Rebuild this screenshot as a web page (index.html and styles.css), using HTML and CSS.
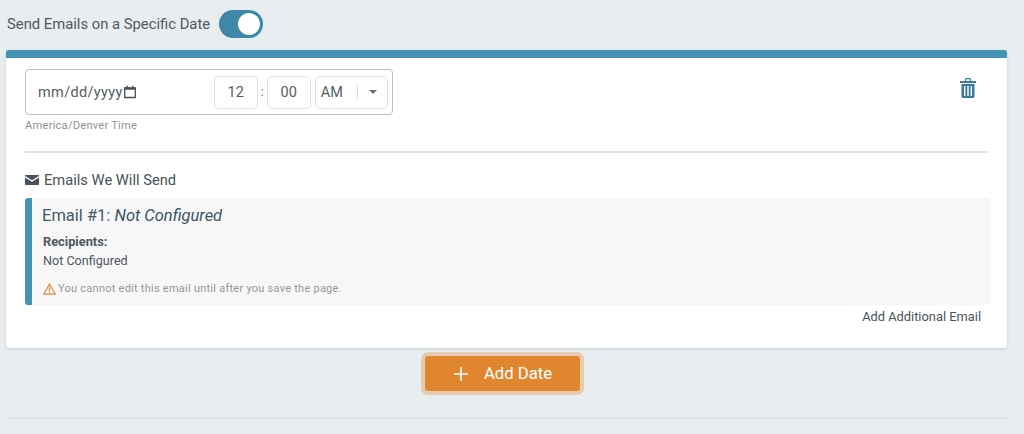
FILE: index.html
```html
<!DOCTYPE html>
<html lang="en">
<head>
<meta charset="utf-8">
<title>Send Emails on a Specific Date</title>
<link rel="stylesheet" href="styles.css">
</head>
<body>
<div class="page">
  <div class="head">
    <span class="head-label">Send Emails on a Specific Date</span>
    <span class="toggle"><span class="knob"></span></span>
  </div>
  <section class="card">
    <div class="card-top">
      <div class="date-col">
        <div class="date-box">
          <span class="date-text">mm/dd/yyyy</span>
          <svg class="cal" viewBox="0 0 14 14" width="14" height="14"><path fill="none" stroke="#4a5157" stroke-width="1.3" d="M1.700 2.800h10.600v9.700H1.700z"/><path fill="#4a5157" d="M1 2.500h12v2.300H1zM3.500.8h1.400v2H3.500zM9.100.8h1.400v2H9.100z"/></svg>
          <span class="time-cell">12</span>
          <span class="colon">:</span>
          <span class="time-cell">00</span>
          <span class="ampm"><span class="ampm-text">AM</span><span class="ampm-sep"></span><span class="caret"></span></span>
        </div>
        <div class="tz">America/Denver Time</div>
      </div>
      <svg class="trash" viewBox="0 0 16 20" width="16" height="20"><path fill="#3a7a96" d="M0 3h16v2H0zM5 3V1.300C5 .6 5.600 0 6.300 0h3.400C10.400 0 11 .6 11 1.300V3H9.800V1.200H6.200V3z"/><path fill="#3a7a96" fill-rule="evenodd" d="M1.500 6h13v12.200c0 1-.8 1.800-1.800 1.800H3.300c-1 0-1.800-.8-1.800-1.800zM4 8v10h1.400V8zM7.300 8v10h1.400V8zM10.600 8v10H12V8z"/></svg>
    </div>
    <hr class="rule">
    <div class="emails-head">
      <svg class="env" viewBox="0 0 14 10" width="14" height="10"><path fill="#4a5157" d="M0 1C0 .4.400 0 1 0h12c.6 0 1 .4 1 1L7 5.200zM0 2.600l7 4.200 7-4.200V9c0 .6-.4 1-1 1H1c-.6 0-1-.4-1-1z"/></svg>
      <span>Emails We Will Send</span>
    </div>
    <div class="email">
      <div class="email-title">Email #1: <em>Not Configured</em></div>
      <div class="rec-label">Recipients:</div>
      <div class="rec-value">Not Configured</div>
      <div class="warn">
        <svg viewBox="0 0 13 12" width="13" height="12"><path fill="none" stroke="#e08a3c" stroke-width="1.200" stroke-linejoin="round" d="M6.500 1 12.300 11.200H.7z"/><path fill="#e08a3c" d="M5.900 4.300h1.200v3.900H5.900zM5.900 8.900h1.200v1.200H5.900z"/></svg>
        <span>You cannot edit this email until after you save the page.</span>
      </div>
    </div>
    <div class="add-email">Add Additional Email</div>
  </section>
  <div class="add-row">
    <button class="add-date" type="button">
      <svg viewBox="0 0 14 14" width="14" height="14"><path fill="#fff" d="M6.200 0h1.600v6.200H14v1.600H7.800V14H6.200V7.800H0V6.200h6.200z"/></svg>
      <span>Add Date</span>
    </button>
  </div>
  <hr class="bottom-rule">
</div>
</body>
</html>
```
FILE: styles.css
```css
* { box-sizing: border-box; }
html, body { margin: 0; padding: 0; }
body {
  width: 1024px;
  height: 434px;
  overflow: hidden;
  background: #e8edf0;
  font-family: Roboto, "Liberation Sans", sans-serif;
  color: #4a5157;
}
.page { padding: 10px 17px 0 6px; }
.head {
  display: flex;
  align-items: center;
  height: 28px;
  margin-bottom: 12px;
}
.head-label { font-size: 14.8px; margin-left: 1px; color: #50585e; }
.toggle {
  display: flex;
  justify-content: flex-end;
  align-items: center;
  width: 44px;
  height: 28px;
  margin-left: 9px;
  padding-right: 3px;
  border-radius: 14px;
  background: #3d87a8;
}
.knob { width: 22px; height: 22px; border-radius: 50%; background: #fff; }
.card {
  height: 298px;
  background: #fff;
  border-top: 8px solid #4493b5;
  border-radius: 3px;
  padding: 11px 19px 0 19px;
  box-shadow: 0 1px 3px rgba(90, 105, 115, .25);
}
.card-top { display: flex; justify-content: space-between; align-items: flex-start; }
.date-box {
  display: flex;
  align-items: center;
  width: 368px;
  height: 46px;
  padding: 0 4px 0 12px;
  border: 1px solid #b9bfc3;
  border-radius: 4px;
}
.date-text { font-size: 14.5px; letter-spacing: .35px; color: #565d63; }
.cal { margin-right: 77px; flex: none; }
.time-cell {
  display: flex;
  align-items: center;
  justify-content: center;
  width: 44px;
  height: 33px;
  border: 1px solid #dfe3e5;
  border-radius: 5px;
  font-size: 14.5px;
  color: #565d63;
}
.colon { width: 9px; text-align: center; font-size: 12px; color: #777; }
.ampm {
  display: flex;
  align-items: center;
  width: 73px;
  height: 33px;
  margin-left: 4px;
  padding-left: 5px;
  border: 1px solid #dfe3e5;
  border-radius: 5px;
  font-size: 14.5px;
  color: #565d63;
}
.ampm-text { width: 36px; }
.ampm-sep { width: 1px; height: 14px; background: #d5d9dc; }
.caret {
  width: 0;
  height: 0;
  margin-left: 11px;
  border-left: 4px solid transparent;
  border-right: 4px solid transparent;
  border-top: 4px solid #6a7176;
}
.tz { margin-top: 4px; font-size: 11.2px; line-height: 14px; letter-spacing: .2px; color: #8d9398; }
.trash { margin: 9px 12px 0 0; flex: none; }
.rule { height: 2px; margin: 18px 0 0; width: 963px; border: 0; background: #dde2e5; }
.emails-head {
  display: flex;
  align-items: center;
  gap: 5px;
  height: 18px;
  margin-top: 18px;
  font-size: 14.7px;
  color: #4a5157;
}
.email {
  width: 965px;
  height: 107px;
  margin-top: 9px;
  padding: 8px 0 0 11px;
  border-left: 7px solid #4493b5;
  border-radius: 3px;
  background: #f7f7f7;
}
.email-title { font-size: 16.5px; line-height: 20px; margin-left: -1px; color: #475a66; }
.email-title em { color: #3a5464; }
.rec-label { margin-top: 8px; font-size: 12.8px; line-height: 16px; font-weight: 700; color: #50585e; }
.rec-value { margin-top: 3px; font-size: 12.6px; line-height: 16px; color: #50585e; }
.warn {
  display: flex;
  align-items: center;
  gap: 2px;
  margin-top: 13px;
  font-size: 11px;
  line-height: 14px;
  letter-spacing: .25px;
  color: #92979b;
}
.add-email {
  width: 956px;
  margin-top: 4px;
  font-size: 12.85px;
  line-height: 16px;
  text-align: right;
  color: #4a5157;
}
.add-row { display: flex; margin: 4px 0 0 415px; }
.add-date {
  display: flex;
  align-items: center;
  justify-content: center;
  gap: 16px;
  width: 163px;
  height: 43px;
  padding: 0 0 0 1px;
  background: #e0862f;
  background-clip: padding-box;
  border: 4px solid rgba(224, 134, 47, .33);
  border-radius: 7px;
  color: #fff;
  font-family: Roboto, "Liberation Sans", sans-serif;
  font-size: 16.7px;
}
.bottom-rule { height: 2px; margin: 22px 0 0 1px; border: 0; background: #dde2e5; }
```
